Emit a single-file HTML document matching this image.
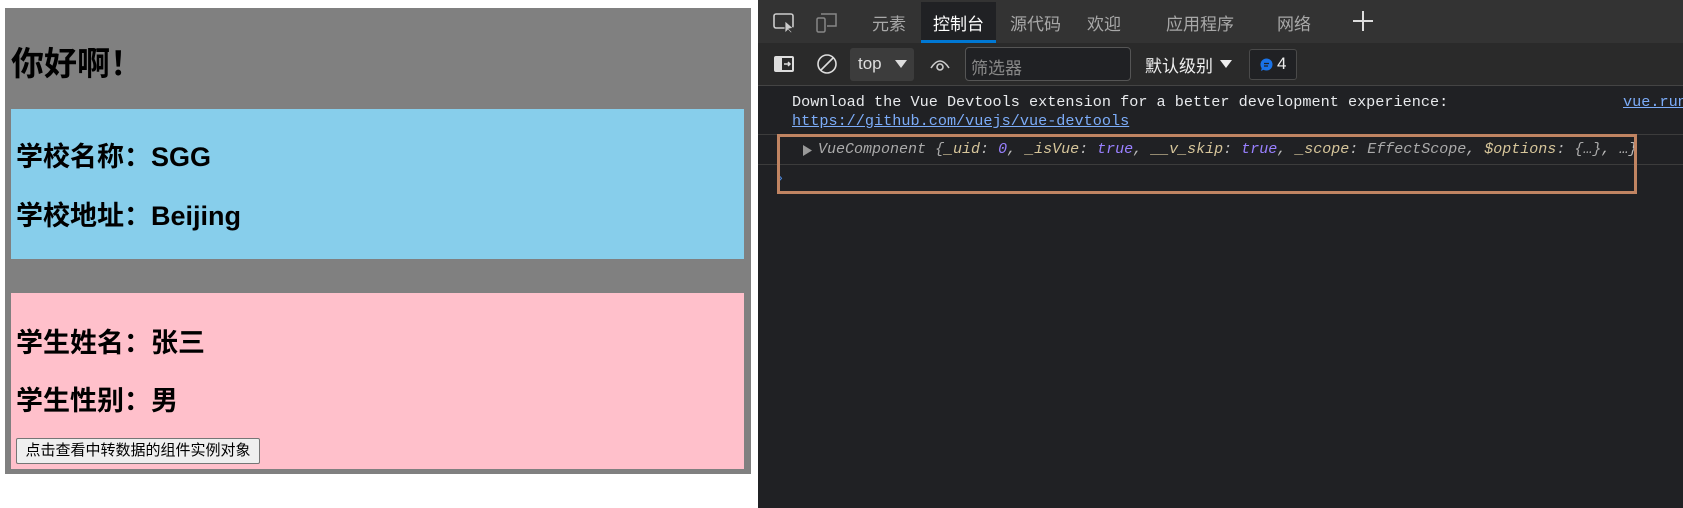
<!DOCTYPE html>
<html><head><meta charset="utf-8"><style>
*{margin:0;padding:0;box-sizing:border-box}
body{width:1683px;height:508px;background:#fff;position:relative;overflow:hidden;font-family:"Liberation Sans","Noto Sans CJK SC",sans-serif}
.a{position:absolute}
.h{font-weight:bold;color:#000;white-space:nowrap}
.dt{left:758px;top:0;width:925px;height:508px;background:#202124}
.tab{color:#a8a8a8;font-size:17px;top:10px;white-space:nowrap}
.mono{font-family:"Liberation Mono",monospace;font-size:15.2px;white-space:nowrap}
</style></head><body>
<div class="a" style="left:5px;top:8px;width:746px;height:466px;background:#808080"></div>
<div class="a h" style="left:11px;top:37px;font-size:33px">你好啊！</div>
<div class="a" style="left:11px;top:109px;width:733px;height:150px;background:#87ceeb"></div>
<div class="a h" style="left:16px;top:135px;font-size:27px">学校名称：SGG</div>
<div class="a h" style="left:16px;top:194px;font-size:27px">学校地址：Beijing</div>
<div class="a" style="left:11px;top:293px;width:733px;height:176px;background:#ffc0cb"></div>
<div class="a h" style="left:16px;top:321px;font-size:27px">学生姓名：张三</div>
<div class="a h" style="left:16px;top:379px;font-size:27px">学生性别：男</div>
<div class="a" style="left:16px;top:438px;width:244px;height:26px;background:#efefef;border:1px solid #767676;border-radius:2px;font-size:15px;color:#000;text-align:center;line-height:24px">点击查看中转数据的组件实例对象</div>

<div class="a dt"></div>
<div class="a" style="left:758px;top:0;width:925px;height:43px;background:#333"></div>
<div class="a" style="left:921px;top:2px;width:75px;height:41px;background:#202124;border-bottom:3px solid #0078d4"></div>
<svg class="a" style="left:773px;top:12px" width="24" height="22" viewBox="0 0 24 22"><rect x="1" y="2" width="19" height="14" rx="2" fill="none" stroke="#ccc" stroke-width="1.6"/><path d="M12 9 L12 21 L15 18 L18 21 L19 20 L16 17 L20 16 Z" fill="#ccc" stroke="#333" stroke-width="0.8"/></svg>
<svg class="a" style="left:816px;top:12px" width="22" height="22" viewBox="0 0 22 22"><rect x="1" y="6" width="8" height="14" rx="1.5" fill="none" stroke="#888" stroke-width="1.5"/><path d="M5 2 H20 V14 H11" fill="none" stroke="#888" stroke-width="1.5"/></svg>
<div class="a tab" style="left:872px">元素</div>
<div class="a tab" style="left:933px;color:#fff">控制台</div>
<div class="a tab" style="left:1010px">源代码</div>
<div class="a tab" style="left:1087px">欢迎</div>
<div class="a tab" style="left:1166px">应用程序</div>
<div class="a tab" style="left:1277px">网络</div>
<div class="a" style="left:1353px;top:20px;width:20px;height:2px;background:#ddd"></div>
<div class="a" style="left:1362px;top:11px;width:2px;height:20px;background:#ddd"></div>

<div class="a" style="left:758px;top:43px;width:925px;height:43px;background:#2a2a2a;border-bottom:1px solid #444"></div>
<svg class="a" style="left:773px;top:54px" width="22" height="20" viewBox="0 0 22 20"><rect x="1" y="2" width="20" height="16" rx="2" fill="#ddd"/><rect x="9" y="4" width="10" height="12" fill="#2a2a2a"/><path d="M11 10 H17 M15 8 L17 10 L15 12" stroke="#ddd" stroke-width="1.5" fill="none"/></svg>
<svg class="a" style="left:816px;top:53px" width="22" height="22" viewBox="0 0 22 22"><circle cx="11" cy="11" r="9" fill="none" stroke="#ddd" stroke-width="1.6"/><path d="M5 17 L17 5" stroke="#ddd" stroke-width="1.6"/></svg>
<div class="a" style="left:850px;top:48px;width:64px;height:33px;background:#3c3c3c;border-radius:3px"></div>
<div class="a" style="left:858px;top:54px;color:#ddd;font-size:17px">top</div>
<svg class="a" style="left:895px;top:59px" width="12" height="10"><path d="M0 1 H12 L6 9 Z" fill="#ddd"/></svg>
<svg class="a" style="left:929px;top:56px" width="22" height="16" viewBox="0 0 22 16"><path d="M2 12 Q11 -2 20 12" fill="none" stroke="#ccc" stroke-width="1.6"/><circle cx="11" cy="11" r="3" fill="none" stroke="#ccc" stroke-width="1.6"/></svg>
<div class="a" style="left:965px;top:47px;width:166px;height:34px;background:#202124;border:1px solid #555;border-radius:4px"></div>
<div class="a" style="left:971px;top:54px;color:#888;font-size:17px">筛选器</div>
<div class="a" style="left:1145px;top:52px;color:#eee;font-size:17px">默认级别</div>
<svg class="a" style="left:1220px;top:59px" width="12" height="10"><path d="M0 1 H12 L6 9 Z" fill="#eee"/></svg>
<div class="a" style="left:1249px;top:49px;width:48px;height:31px;background:#202124;border:1px solid #4a4a4a;border-radius:3px"></div>
<svg class="a" style="left:1258px;top:57px" width="16" height="16" viewBox="0 0 16 16"><circle cx="8.5" cy="7.5" r="6" fill="#1a73e8"/><path d="M3 14 L4 10 L7 12 Z" fill="#1a73e8"/><path d="M6 6.5 H11 M6 9 H10" stroke="#202124" stroke-width="1.2"/></svg>
<div class="a" style="left:1277px;top:54px;color:#eee;font-size:17px">4</div>

<div class="a mono" style="left:792px;top:93px;color:#e8eaed">Download the Vue Devtools extension for a better development experience:</div>
<div class="a mono" style="left:792px;top:112px;color:#7cacf8;text-decoration:underline">https://github.com/vuejs/vue-devtools</div>
<div class="a mono" style="left:1623px;top:93px;color:#7cacf8;text-decoration:underline">vue.run</div>
<div class="a" style="left:758px;top:134px;width:925px;height:1px;background:#3c3c3c"></div>
<div class="a" style="left:758px;top:164px;width:925px;height:1px;background:#3c3c3c"></div>
<svg class="a" style="left:803px;top:145px" width="9" height="11"><path d="M0 0 L9 5.5 L0 11 Z" fill="#999"/></svg>
<div class="a mono" style="left:818px;top:141px;font-size:15px;font-style:italic;color:#bbb"><span style="color:#aaa">VueComponent {</span><span style="color:#d6c59a">_uid</span>: <span style="color:#9980ff">0</span>, <span style="color:#d6c59a">_isVue</span>: <span style="color:#9980ff">true</span>, <span style="color:#d6c59a">__v_skip</span>: <span style="color:#9980ff">true</span>, <span style="color:#d6c59a">_scope</span>: <span style="color:#aaa">EffectScope</span>, <span style="color:#d6c59a">$options</span>: <span style="color:#aaa">{…}</span>, …}</div>
<div class="a" style="left:778px;top:169px;color:#4d8ae0;font-size:14px">›</div>
<div class="a" style="left:777px;top:134px;width:860px;height:60px;border:3px solid #c08462"></div>
</body></html>
